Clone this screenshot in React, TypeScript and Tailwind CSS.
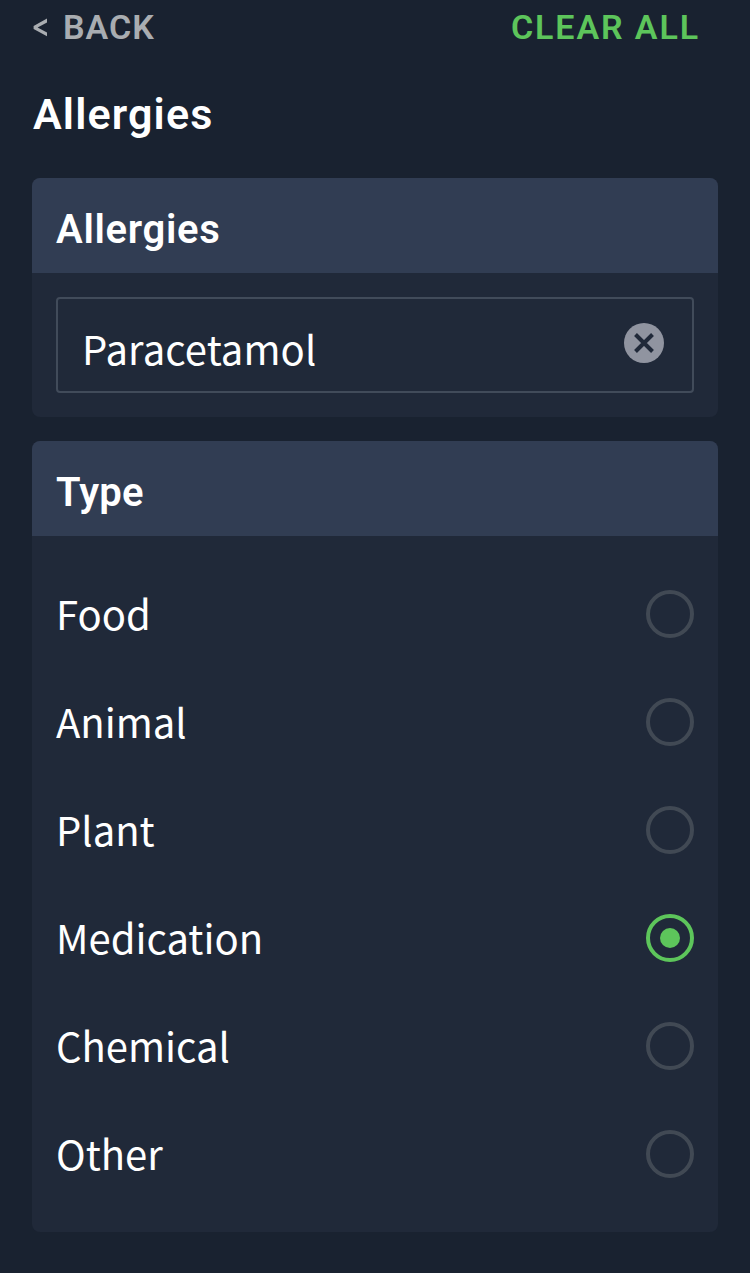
import { useState } from "react";

const TYPES = ["Food", "Animal", "Plant", "Medication", "Chemical", "Other"];

const heading = "font-['Roboto',sans-serif] font-semibold text-white";
const body = "font-['Noto_Sans_CJK_SC',sans-serif] text-[40px] leading-[60px] text-white";

function Radio({ checked }: { checked: boolean }) {
  return (
    <span
      className={`flex size-12 items-center justify-center rounded-full border-4 ${
        checked ? "border-[#5dc55b]" : "border-[#414954]"
      }`}
    >
      {checked && <span className="size-5 rounded-full bg-[#5dc55b]" />}
    </span>
  );
}

export default function App() {
  const [selected, setSelected] = useState("Medication");
  const [name, setName] = useState("Paracetamol");

  return (
    <div className="flex h-[1273px] w-[750px] flex-col bg-[#192230] px-8">
      <div className="flex h-[55px] items-center justify-between pr-[18px] font-['Roboto',sans-serif] text-[34px] font-semibold leading-[55px]">
        <button className="flex items-center text-[#a9adb1]">
          <svg width="15" height="20" viewBox="0 0 15 20" className="mr-4">
            <path d="M15 0.5V4.4L5.6 9.4L15 14.4V18.3L1.6 10.9V7.9Z" fill="currentColor" />
          </svg>
          <span className="tracking-[1px]">BACK</span>
        </button>
        <button className="tracking-[1.9px] text-[#5dc55b]">CLEAR ALL</button>
      </div>

      <h1 className={`${heading} h-[123px] pl-px text-[43px] leading-[119px] tracking-[1.15px]`}>Allergies</h1>

      <section className="mb-6 overflow-hidden rounded-lg bg-[#202939]">
        <h2 className={`${heading} h-[95px] bg-[#313d53] px-6 pt-2 text-[40px] leading-[87px] tracking-[0.7px]`}>Allergies</h2>
        <div className="p-6">
          <div className="flex h-24 items-center justify-between rounded border-2 border-[#414b5a] pl-6 pr-7">
            <input
              value={name}
              onChange={(e) => setName(e.target.value)}
              className={`${body} mt-1.5 w-[480px] bg-transparent tracking-[0.1px] outline-none`}
            />
            <button aria-label="Clear" onClick={() => setName("")} className="mb-1">
              <svg width="40" height="40" viewBox="0 0 40 40">
                <circle cx="20" cy="20" r="20" fill="#9094a0" />
                <path d="M11.5 11.5L28.5 28.5M28.5 11.5L11.5 28.5" stroke="#202939" strokeWidth="4" />
              </svg>
            </button>
          </div>
        </div>
      </section>

      <section className="overflow-hidden rounded-lg bg-[#202939]">
        <h2 className={`${heading} h-[95px] bg-[#313d53] px-6 pt-2 text-[40px] leading-[87px] tracking-[0.2px]`}>Type</h2>
        <div className="flex flex-col py-6">
          {TYPES.map((type) => (
            <button
              key={type}
              onClick={() => setSelected(type)}
              className="flex h-[108px] items-center justify-between px-6 text-left"
            >
              <span className={`${body} mb-0.5 tracking-normal`}>{type}</span>
              <Radio checked={selected === type} />
            </button>
          ))}
        </div>
      </section>
    </div>
  );
}
